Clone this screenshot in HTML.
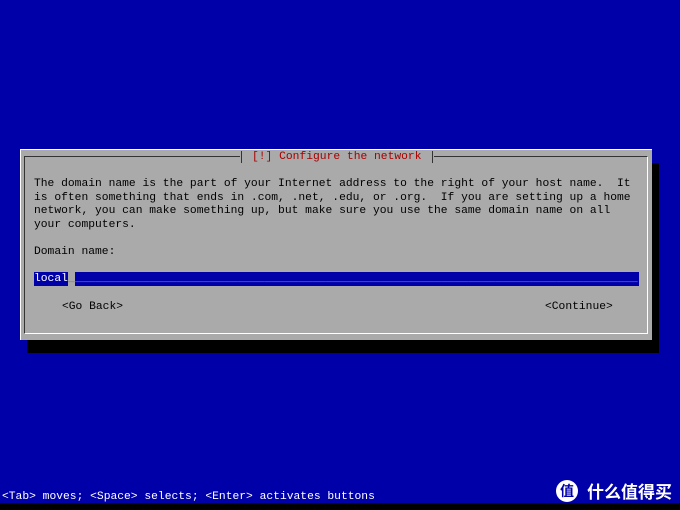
<!DOCTYPE html>
<html><head><meta charset="utf-8"><style>
body{margin:0;width:680px;height:510px;background:#0000a8;position:relative;overflow:hidden;font-family:"Liberation Mono",monospace;font-size:11.3px;}
.t{position:absolute;white-space:pre;line-height:13.6px;color:#000;}
.b{position:absolute;}
</style></head><body>
<div class="b" style="left:27px;top:340px;width:632px;height:13px;background:#000"></div>
<div class="b" style="left:652px;top:163px;width:7px;height:190px;background:#000"></div>
<div class="b" style="left:20px;top:149px;width:632px;height:191px;background:#aaa;border-top:1px solid #fff;border-left:1px solid #fff;box-sizing:border-box"></div>
<div class="b" style="left:24px;top:156px;width:624px;height:178px;border-top:1px solid #333;border-left:1px solid #333;border-bottom:1px solid #fff;border-right:1px solid #fff;box-sizing:border-box"></div>
<div class="b" style="left:240px;top:151px;width:194px;height:13px;background:#aaa"></div>
<div class="b" style="left:241px;top:151px;width:1px;height:12px;background:#333"></div>
<div class="b" style="left:432px;top:151px;width:1px;height:12px;background:#333"></div>
<div class="t" style="left:252px;top:151px;color:#a80000">[!] Configure the network</div>
<div class="t" style="left:34px;top:178px">The domain name is the part of your Internet address to the right of your host name.  It
is often something that ends in .com, .net, .edu, or .org.  If you are setting up a home
network, you can make something up, but make sure you use the same domain name on all
your computers.

Domain name:</div>
<div class="b" style="left:34px;top:272px;width:605px;height:14px;background:#0000a8"></div>
<div class="b" style="left:68px;top:272px;width:7px;height:14px;background:#aaa"></div>
<div class="t" style="left:34px;top:273px;color:#fff">local</div>
<div class="t" style="left:68px;top:273px;color:#777">_</div>
<div class="t" style="left:75px;top:273px;color:#8888cc">___________________________________________________________________________________</div>
<div class="t" style="left:62px;top:301px">&lt;Go Back&gt;</div>
<div class="t" style="left:545px;top:301px">&lt;Continue&gt;</div>
<div class="t" style="left:2px;top:491px;color:#fff">&lt;Tab&gt; moves; &lt;Space&gt; selects; &lt;Enter&gt; activates buttons</div>
<div class="b" style="left:0;top:503px;width:680px;height:7px;background:#000"></div>
<div class="b" style="left:556px;top:480px;width:22px;height:22px;border-radius:50%;background:#fff;color:#0000a8;font:bold 14px 'Noto Sans CJK SC',sans-serif;text-align:center;line-height:22px">值</div>
<div class="t" style="left:587px;top:479px;color:#fff;font:bold 17px 'Noto Sans CJK SC',sans-serif;line-height:24px">什么值得买</div>
</body></html>
